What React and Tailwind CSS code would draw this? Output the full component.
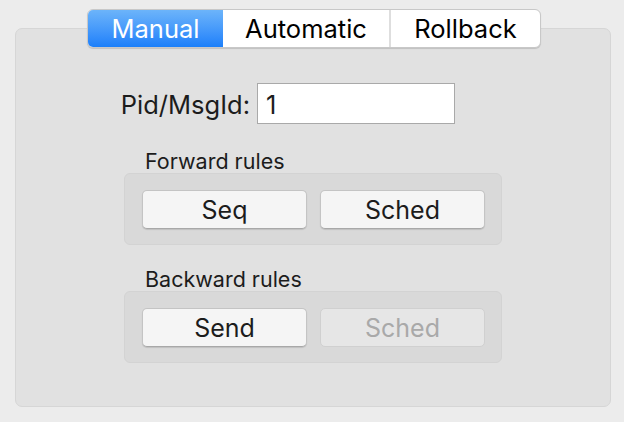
import React from "react";

const font = { fontFamily: "Inter, 'Liberation Sans', sans-serif" };

const RuleButton = ({ label, disabled = false }) => (
  <div
    className={
      disabled
        ? "w-[165px] h-[39px] flex items-center justify-center pt-[2px] rounded-[5px] border border-[#d0d0d0] bg-[#e6e6e6] text-[25px] text-[#a9a9a9]"
        : "w-[165px] h-[39px] flex items-center justify-center pt-[2px] rounded-[5px] border border-[#c4c4c4] border-b-[#a8a8a8] bg-[#f5f5f5] text-[25px] text-[#1c1c1c] shadow-[0_1px_1px_rgba(0,0,0,0.12)]"
    }
  >
    {label}
  </div>
);

const RuleGroup = ({ title, children }) => (
  <div className="flex flex-col">
    <div className="ml-[21px] h-[24px] text-[21.5px] leading-[24px] text-[#1c1c1c]">
      {title}
    </div>
    <div className="w-[378px] h-[72px] rounded-[6px] border border-[#d3d3d3] bg-[#d9d9d9] flex items-center gap-[13px] pl-[17px]">
      {children}
    </div>
  </div>
);

export default function App() {
  return (
    <div
      className="w-[624px] h-[422px] bg-[#ececec] pt-[9px] pl-[15px] pr-[13px] flex flex-col"
      style={font}
    >
      {/* Segmented tabs */}
      <div className="relative z-10 self-start ml-[72px] flex h-[39px] rounded-[6px] bg-white border border-[#c8c8c8] shadow-[0_1px_1px_rgba(0,0,0,0.15)] overflow-hidden text-[25.5px]">
        <div className="w-[135px] flex items-center justify-center pt-[2px] text-white bg-gradient-to-b from-[#6cb4fa] to-[#1a7ffa]">
          Manual
        </div>
        <div className="w-[168px] flex items-center justify-center pt-[2px] text-black border-r-2 border-[#dedede]">
          Automatic
        </div>
        <div className="w-[149px] flex items-center justify-center pt-[2px] text-black">
          Rollback
        </div>
      </div>

      {/* Panel */}
      <div className="mt-[-20px] h-[379px] rounded-[7px] border border-[#d6d6d6] bg-[#e1e1e1] flex flex-col pl-[108px]">
        <div className="mt-[54px] ml-[-4px] flex items-center">
          <div className="w-[130px] pt-[3px] text-[25.5px] text-[#1c1c1c] text-right whitespace-nowrap">
            Pid/MsgId:
          </div>
          <div className="ml-[7px] w-[198px] h-[41px] border border-[#a9a9a9] bg-white flex items-center pt-[3px] pl-[8px] text-[25.5px] text-[#1c1c1c]">
            1
          </div>
        </div>

        <div className="mt-[25px]">
          <RuleGroup title="Forward rules">
            <RuleButton label="Seq" />
            <RuleButton label="Sched" />
          </RuleGroup>
        </div>

        <div className="mt-[22px]">
          <RuleGroup title="Backward rules">
            <RuleButton label="Send" />
            <RuleButton label="Sched" disabled />
          </RuleGroup>
        </div>
      </div>
    </div>
  );
}
